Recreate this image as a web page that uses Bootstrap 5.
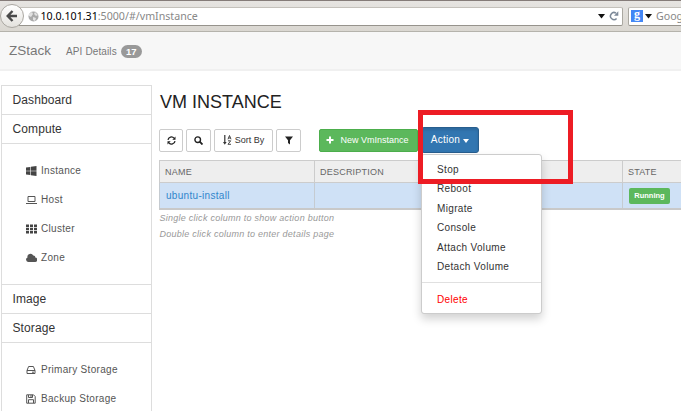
<!DOCTYPE html>
<html lang="en">
<head>
<meta charset="utf-8">
<meta name="viewport" content="width=device-width, initial-scale=1">
<title>ZStack</title>
<link href="https://cdn.jsdelivr.net/npm/bootstrap@5.3.0/dist/css/bootstrap.min.css" rel="stylesheet">
<style>
body{font-family:"Liberation Sans",Arial,sans-serif;font-size:10px;letter-spacing:.3px;line-height:1.4;color:#333;height:411px;overflow:hidden;background:#fff}
svg{display:block;flex:none}
/* browser toolbar */
.toolbar{height:32px;background:linear-gradient(#e6e4e1,#dad7d1);border-top:1px solid #857c79;border-bottom:1px solid #b5b3ac;font-family:"Noto Sans","Open Sans",sans-serif;letter-spacing:0;position:relative}
.tab-edge{position:absolute;left:316px;top:-1px;width:173px;height:1px;background:#e3e1de}
.back{width:24px;height:24px;flex:none;border-radius:50%;border:1px solid #aaa7a1;background:linear-gradient(#fff,#e4e2de);z-index:1;margin-right:-7px}
.field{height:19px;background:#fff;border:1px solid #aaa8a1;border-top-color:#c4c1bb;border-bottom-color:#96938c}
.address{width:606px;flex:none;border-radius:0 2px 2px 0;padding-left:10px;padding-right:3px}
.finder{width:60px;border-radius:2px;margin-left:5px;padding-left:2px}
.url{font-size:10.65px;color:#888;margin-left:1.5px;line-height:17px}
.url b{font-weight:400;color:#000}
.gbox{width:12px;height:12px;flex:none;background:#4387f5;color:#fff;font:700 12px/9px "Liberation Serif",serif;text-align:center}
/* application header */
.appbar{height:39px;background:#f7f7f7;border-bottom:2px solid #f0f0f0;color:#777;padding:0 9px}
.brand{font-size:13.5px;letter-spacing:0;line-height:38px}
.api{margin-left:15px;letter-spacing:.12px;padding-top:2px}
.count{background:#999;font-size:9.5px;padding:0;width:21px;line-height:13px;letter-spacing:0;margin-left:4px;margin-top:1px}
/* page body */
.page{height:340px}
.side{width:151px;margin-left:1px;margin-top:14px;border:1px solid #ddd;border-bottom:0}
.side-head{font-size:12px;letter-spacing:.1px;height:29px;line-height:29px;padding-left:10.5px;border-bottom:1px solid #ddd;color:#333}
.side-body{height:141px;padding:12px 0 0 24px;border-bottom:1px solid #ddd;color:#555}
.side-item{height:29px;gap:4px;padding-top:1px}
.main{padding-left:7px;min-width:0;margin-top:19px}
h1{font-size:18px;line-height:24px;letter-spacing:0;margin:0 0 12px 1px;color:#222}
.tools{height:26px;gap:3px;margin-top:13px}
.tools .btn{font-family:inherit;font-size:9px;line-height:12px;height:23px;padding:0;border-radius:2px;display:flex;flex:none;align-items:center;justify-content:center;letter-spacing:0}
.tools .plain{border:1px solid #ccc;color:#333;background:#fff}
.w-first{width:24px}.w-icon{width:25px}.w-sort{width:59px}
.tools .fresh{width:99px;background:#5cb85c;border:1px solid #4cae4c;color:#fff;margin-left:15px;padding-right:2px}
.tools .act{width:58px;height:26px;background:#3276b1;border:1px solid #285e8e;color:#fff;font-size:10px;letter-spacing:.25px;border-radius:3px;box-shadow:inset 0 2px 3px rgba(0,0,0,.12)}
.tools .act::after{margin-left:3px;margin-top:1px;border-top-width:4px;border-left-width:3.5px;border-right-width:3.5px}
.grid{width:560px;table-layout:fixed;border-collapse:collapse;margin:7px 0 0}
.grid th{height:22px;background:#eee;border:1px solid #ccc;font-size:9px;font-weight:400;letter-spacing:.22px;color:#666;padding:2px 0 0 5px}
.grid td{height:26px;background:#cfe1f6;border:1px solid #c5cbd1;border-bottom:2px solid #c9c9c9;padding:2px 0 0 6px}
.grid a{color:#2f86cc;text-decoration:none}
.c1{width:155px}.c2{width:308px}
.running{background:#5cb85c;font-size:7.5px;line-height:16px;width:41px;padding:0;border-radius:2px;letter-spacing:0;font-weight:700;display:block}
.hint{font-size:9px;font-style:italic;letter-spacing:.26px;color:#999;line-height:16.5px;padding-left:.5px}
.actions{display:block;left:421px;top:154px;min-width:0;width:121px;height:160px;padding:5px 0 0;border:1px solid #ccc;border-radius:3px;box-shadow:0 5px 10px rgba(0,0,0,.18);font-size:10px}
.actions .dropdown-item{padding:0 0 0 15px;height:19.4px;line-height:19.4px;color:#333;letter-spacing:.34px}
.actions .dropdown-divider{margin:6px 0 7px;border-color:#e0e0e0}
.actions .dropdown-item.erase{color:#f00}
.outline{position:absolute;left:418px;top:110px;width:155px;height:74px;border:5px solid #ed1c24;z-index:1100;pointer-events:none}
</style>
<script src="https://cdn.jsdelivr.net/npm/bootstrap@5.3.0/dist/js/bootstrap.bundle.min.js"></script>
</head>
<body class="position-relative">
<div class="toolbar d-flex align-items-center overflow-hidden">
  <span class="tab-edge"></span>
  <span class="back d-flex align-items-center justify-content-center"><svg width="12" height="12" viewBox="0 0 12 12" fill="none" stroke="#4a4a4a" stroke-width="2.4"><path d="M6.5 1L1.7 6l4.8 5M2 6h9"/></svg></span>
  <div class="field address d-flex align-items-center">
    <svg width="11" height="11" viewBox="0 0 11 11"><circle cx="5.5" cy="5.5" r="5" fill="#aaa"/><path d="M1 3l3-2 1 2-2 3-2-1zM7 1l3 3-2 1-2-2zM5 6l3 1-1 3-2-1z" fill="#e2e2e2"/></svg>
    <span class="url"><b>10.0.101.31</b>:5000/#/vmInstance</span>
    <svg class="ms-auto me-1" width="7" height="5" viewBox="0 0 7 5"><path d="M0 0h7L3.5 4.5z" fill="#111"/></svg>
    <svg width="10" height="10" viewBox="0 0 10 10" fill="none" stroke="#7c8998" stroke-width="1.5"><path d="M7.6 7.4A3.5 3.5 0 1 1 7 2.2"/><path d="M9.3.3v4.4H5z" fill="#7c8998" stroke="none"/></svg>
  </div>
  <div class="field finder d-flex align-items-center flex-shrink-0">
    <span class="gbox">g</span>
    <svg style="margin-left:2px" width="7" height="5" viewBox="0 0 7 5"><path d="M0 0h7L3.5 4.5z" fill="#111"/></svg>
    <span class="url ms-1">Google</span>
  </div>
</div>
<nav class="appbar d-flex align-items-center">
  <span class="brand">ZStack</span><span class="api">API Details</span><span class="badge rounded-pill count">17</span>
</nav>
<div class="page d-flex align-items-start overflow-hidden">
  <aside class="side flex-shrink-0">
    <div class="side-head">Dashboard</div>
    <div class="side-head">Compute</div>
    <div class="side-body">
      <div class="side-item d-flex align-items-center"><svg width="11" height="10" viewBox="0 0 11 10" fill="#444"><path d="M0 1.5l4.3-.6v3.8H0zM4.9.8L10.5 0v4.7H4.9zM0 5.3h4.3v3.8L0 8.5zM4.9 5.3h5.6V10l-5.6-.8z"/></svg><span>Instance</span></div>
      <div class="side-item d-flex align-items-center"><svg width="11" height="10" viewBox="0 0 11 10" fill="none" stroke="#555"><path d="M2 1.5h7v5H2zM0 8.5h11"/></svg><span>Host</span></div>
      <div class="side-item d-flex align-items-center"><svg width="11" height="10" viewBox="0 0 11 10" fill="#444"><path d="M0 .5h3V3H0zM4 .5h3V3H4zM8 .5h3V3H8zM0 3.8h3v2.5H0zM4 3.8h3v2.5H4zM8 3.8h3v2.5H8zM0 7.1h3v2.4H0zM4 7.1h3v2.4H4zM8 7.1h3v2.4H8z"/></svg><span>Cluster</span></div>
      <div class="side-item d-flex align-items-center"><svg width="11" height="10" viewBox="0 0 11 10" fill="#555"><path d="M2.5 9A2.4 2.4 0 0 1 1.5 4.4 3 3 0 0 1 7.2 2.6 1.7 1.7 0 0 1 9.2 4.6 2.2 2.2 0 0 1 8.8 9z"/></svg><span>Zone</span></div>
    </div>
    <div class="side-head">Image</div>
    <div class="side-head">Storage</div>
    <div class="side-body">
      <div class="side-item d-flex align-items-center"><svg width="11" height="10" viewBox="0 0 11 10" fill="none" stroke="#555"><path d="M1 5.5L2.6 1.5h4.8L9 5.5v3H1zM1 5.5h8M6 7.2h2"/></svg><span>Primary Storage</span></div>
      <div class="side-item d-flex align-items-center"><svg width="11" height="10" viewBox="0 0 11 10" fill="none" stroke="#555"><path d="M.7.8h6.8l1.7 1.7v6.7H.7zM2.5 9V5.7h5V9M2.5 1v2.5h4V1M5 1v2"/></svg><span>Backup Storage</span></div>
    </div>
  </aside>
  <main class="main flex-grow-1 overflow-hidden">
    <h1 class="fw-normal">VM INSTANCE</h1>
    <div class="tools d-flex align-items-center">
      <button class="btn plain w-first" aria-label="Refresh"><svg width="9" height="9" viewBox="0 0 9 9" fill="none" stroke="#222" stroke-width="1.3"><path d="M1 3.8A3.4 3.4 0 0 1 7 2.2M8 5.2A3.4 3.4 0 0 1 2 6.8"/><path d="M8.5.5v3.2H5.3zM.5 8.5V5.3h3.2z" fill="#222" stroke="none"/></svg></button>
      <button class="btn plain w-icon" aria-label="Search"><svg width="9" height="9" viewBox="0 0 9 9" fill="none" stroke="#222" stroke-width="1.4"><circle cx="3.7" cy="3.7" r="2.8"/><path d="M5.7 5.7L8.5 8.5" stroke-width="1.8"/></svg></button>
      <button class="btn plain w-sort"><svg style="margin-right:3px" width="9" height="10" viewBox="0 0 9 10" fill="none" stroke="#333"><path d="M1.8 0v8" stroke-width="1.2"/><path d="M0 7h3.6L1.8 9.8z" fill="#333" stroke="none"/><path d="M5 4.3L6.5.5 8 4.3M5.6 3h1.8M5 5.8h2.7L5 9.3h3" stroke-width=".9"/></svg>Sort By</button>
      <button class="btn plain w-icon" aria-label="Filter"><svg width="8" height="9" viewBox="0 0 8 9" fill="#222"><path d="M0 .5h8L5 4.2V8.5L3 7V4.2z"/></svg></button>
      <button class="btn fresh"><svg width="8" height="8" viewBox="0 0 8 8" stroke="#fff" stroke-width="2"><path d="M4 .5v7M.5 4h7"/></svg><span style="margin-left:6px">New VmInstance</span></button>
      <button class="btn act dropdown-toggle">Action</button>
    </div>
    <table class="grid">
      <thead><tr><th class="c1">NAME</th><th class="c2">DESCRIPTION</th><th>STATE</th></tr></thead>
      <tbody><tr><td><a href="#">ubuntu-install</a></td><td></td><td><span class="badge running">Running</span></td></tr></tbody>
    </table>
    <div class="hint">Single click column to show action button</div>
    <div class="hint">Double click column to enter details page</div>
  </main>
</div>
<ul class="dropdown-menu actions">
  <li><a class="dropdown-item" href="#">Stop</a></li>
  <li><a class="dropdown-item" href="#">Reboot</a></li>
  <li><a class="dropdown-item" href="#">Migrate</a></li>
  <li><a class="dropdown-item" href="#">Console</a></li>
  <li><a class="dropdown-item" href="#">Attach Volume</a></li>
  <li><a class="dropdown-item" href="#">Detach Volume</a></li>
  <li><hr class="dropdown-divider"></li>
  <li><a class="dropdown-item erase" href="#">Delete</a></li>
</ul>
<div class="outline"></div>
</body>
</html>
